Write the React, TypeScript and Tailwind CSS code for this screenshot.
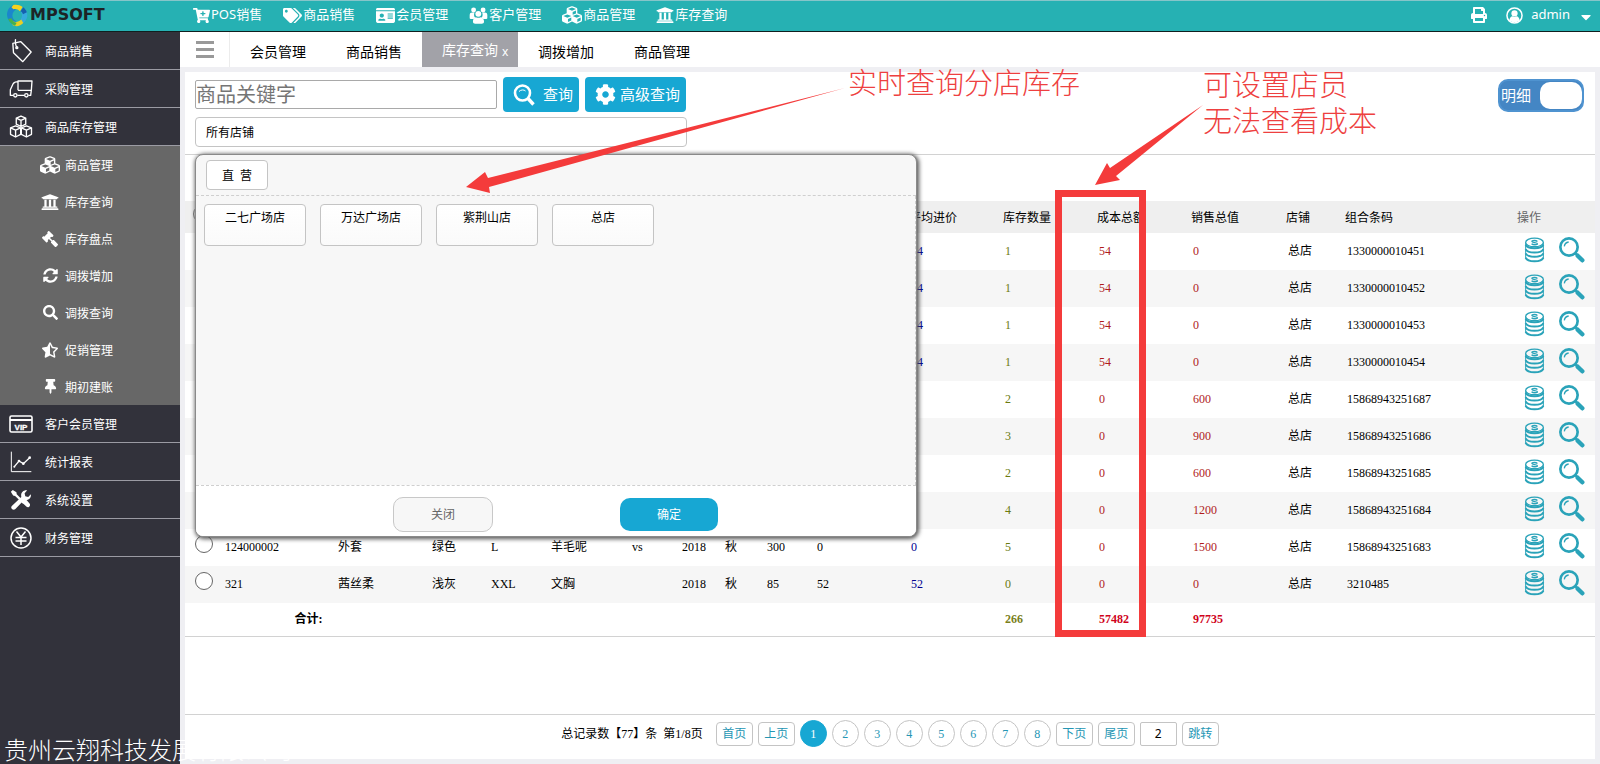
import { useState } from "react";
import type { ReactNode } from "react";
import {
  FaCartPlus,
  FaTags,
  FaIdCard,
  FaCubes,
  FaUniversity,
  FaGavel,
  FaSyncAlt,
  FaSearch,
  FaStarHalfAlt,
  FaThumbtack,
  FaPrint,
  FaCaretDown,
  FaCog,
} from "react-icons/fa";

interface StockRow {
  code?: string;
  name?: string;
  color?: string;
  size?: string;
  material?: string;
  brand?: string;
  year?: string;
  season?: string;
  price?: string;
  cost?: string;
  avg?: string;
  qty: string;
  costTotal: string;
  saleTotal: string;
  barcode: string;
}

const topNav = [
  { label: "POS销售", icon: <FaCartPlus size={17} /> },
  { label: "商品销售", icon: <FaTags size={19} /> },
  { label: "会员管理", icon: <FaIdCard size={19} /> },
  { label: "客户管理", icon: <UsersIcon /> },
  { label: "商品管理", icon: <FaCubes size={20} /> },
  { label: "库存查询", icon: <FaUniversity size={18} /> },
];

const stockMenu = [
  { label: "商品管理", icon: <FaCubes size={20} /> },
  { label: "库存查询", icon: <FaUniversity size={18} /> },
  { label: "库存盘点", icon: <FaGavel size={16} className="-scale-x-100" /> },
  { label: "调拨增加", icon: <FaSyncAlt size={15} /> },
  { label: "调拨查询", icon: <FaSearch size={15} /> },
  { label: "促销管理", icon: <FaStarHalfAlt size={16} /> },
  { label: "期初建账", icon: <FaThumbtack size={15} /> },
];

const tabs = ["会员管理", "商品销售", "库存查询", "调拨增加", "商品管理"];
const stores = ["二七广场店", "万达广场店", "紫荆山店", "总店"];
const pages = [1, 2, 3, 4, 5, 6, 7, 8];

const rows: StockRow[] = [
  { avg: "54", qty: "1", costTotal: "54", saleTotal: "0", barcode: "1330000010451" },
  { avg: "54", qty: "1", costTotal: "54", saleTotal: "0", barcode: "1330000010452" },
  { avg: "54", qty: "1", costTotal: "54", saleTotal: "0", barcode: "1330000010453" },
  { avg: "54", qty: "1", costTotal: "54", saleTotal: "0", barcode: "1330000010454" },
  { qty: "2", costTotal: "0", saleTotal: "600", barcode: "15868943251687" },
  { qty: "3", costTotal: "0", saleTotal: "900", barcode: "15868943251686" },
  { qty: "2", costTotal: "0", saleTotal: "600", barcode: "15868943251685" },
  { qty: "4", costTotal: "0", saleTotal: "1200", barcode: "15868943251684" },
  {
    code: "124000002",
    name: "外套",
    color: "绿色",
    size: "L",
    material: "羊毛呢",
    brand: "vs",
    year: "2018",
    season: "秋",
    price: "300",
    cost: "0",
    avg: "0",
    qty: "5",
    costTotal: "0",
    saleTotal: "1500",
    barcode: "15868943251683",
  },
  {
    code: "321",
    name: "茜丝柔",
    color: "浅灰",
    size: "XXL",
    material: "文胸",
    year: "2018",
    season: "秋",
    price: "85",
    cost: "52",
    avg: "52",
    qty: "0",
    costTotal: "0",
    saleTotal: "0",
    barcode: "3210485",
  },
];

function LogoMark() {
  return (
    <svg viewBox="18 12 66 70" className="h-[23px] w-[22px]">
      <path d="M44 14C28 18 19 32 21 48c2 14 11 24 24 29l4-12c-8-4-12-10-12-18 0-9 5-15 13-19Z" fill="#1b86cc" />
      <path d="M40 15c10-2 20 0 28 6l-8 13c-6-6-13-8-20-6l-6-6Z" fill="#f6d21f" />
      <path d="M70 22c10 7 14 18 12 29-2 9-7 16-14 20l-6-13c5-6 6-14 1-22Z" fill="#35a9dd" />
      <path d="M36 62c9 7 19 6 28-3l6 11c-8 9-20 12-32 7Z" fill="#e9cf25" />
      <path d="M24 58c4 9 11 17 21 20l5-9c-8-2-13-7-16-14Z" fill="#45b04f" />
      <path d="M70 22c5 4 9 9 11 15l-12 6c-1-4-3-7-7-9Z" fill="#1560ae" />
    </svg>
  );
}

function UsersIcon() {
  return (
    <svg viewBox="266 16 58 52" className="h-[17px] w-[19px]" fill="currentColor">
      <circle cx="280" cy="25" r="7.500" />
      <circle cx="309" cy="25" r="7.500" />
      <path d="M268 50V41c0-6 3-8 8-8h7c-3 6-2 12 2 16l-5 4h-7c-3 0-5-1-5-3ZM322 50V41c0-6-3-8-8-8h-8c3 6 2 12-2 16l6 4h7c3 0 5-1 5-3Z" />
      <circle cx="294.500" cy="37" r="9" />
      <path d="M278 61c0-8 3-13 9-14 5 3 10 3 15 0 6 1 10 6 10 14 0 4-3 6-7 6h-20c-4 0-7-2-7-6Z" />
    </svg>
  );
}

function UserCircleIcon() {
  return (
    <svg viewBox="0 0 18 18" className="ml-[19px] size-[17px]">
      <circle cx="9" cy="9" r="8" fill="none" stroke="currentColor" strokeWidth="1.600" />
      <circle cx="9" cy="6.800" r="3.300" fill="currentColor" />
      <path d="M3.500 14c.5-3 2-4 3.200-4.200 1.500 1 3.100 1 4.600 0 1.200.2 2.700 1.200 3.200 4.200-3 3-8 3-11 0Z" fill="currentColor" />
    </svg>
  );
}

function TagIcon() {
  return (
    <svg viewBox="30 114 68 72" className="h-6 w-[23px]" fill="none" stroke="currentColor" strokeWidth="4" strokeLinejoin="round">
      <path d="M38 127l24-5 31 31-25 29-28-27Z" />
      <circle cx="50" cy="140" r="3" />
      <path d="M50 139c-4-6-5-13-4-23" strokeLinecap="round" />
    </svg>
  );
}

function TruckIcon() {
  return (
    <svg viewBox="28 230 72 60" className="h-5 w-6" fill="none" stroke="currentColor" strokeWidth="4" strokeLinejoin="round">
      <path d="M55 264V236h42l-2 28H55M95 264l-2 15h-7M74 279H53M41 279h-9V262l8-17c3-6 8-7 15-7" />
      <circle cx="47" cy="279" r="5" />
      <circle cx="80" cy="279" r="5" />
    </svg>
  );
}

function BoxesIcon() {
  return (
    <svg viewBox="30 345 70 68" className="h-[23px] w-6" fill="none" stroke="currentColor" strokeWidth="4" strokeLinejoin="round">
      <path d="M65 348l14 6v18l-14 7-14-7v-18ZM51 354l14 7 14-7M65 361v18" />
      <path d="M49 377l15 6v19l-15 8-15-8v-19ZM34 383l15 7 15-7M49 390v20" />
      <path d="M81 377l15 6v19l-15 8-15-8v-19ZM66 383l15 7 15-7M81 390v20" />
    </svg>
  );
}

function VipIcon() {
  return (
    <svg viewBox="0 0 24 18" className="h-[18px] w-6" fill="none" stroke="currentColor" strokeWidth="1.600">
      <rect x="1" y="1" width="22" height="16" rx="1.500" />
      <path d="M1 5h22" strokeWidth="2" />
      <text x="12" y="14.500" textAnchor="middle" fontSize="8" fontWeight="700" fill="currentColor" stroke="currentColor" strokeWidth=".3" fontFamily="Liberation Sans, sans-serif">
        VIP
      </text>
    </svg>
  );
}

function ChartIcon() {
  return (
    <svg viewBox="32 508 66 66" className="size-[22px]" fill="none" stroke="currentColor" strokeWidth="3">
      <path d="M36 510v60h60" />
      <path d="M45 555l14-17 13 8 19-18" strokeWidth="4" />
      <g fill="currentColor" stroke="none">
        <circle cx="45" cy="555" r="3" />
        <circle cx="59" cy="538" r="4" />
        <circle cx="72" cy="546" r="4" />
        <circle cx="91" cy="528" r="4" />
      </g>
    </svg>
  );
}

function ToolsIcon() {
  return (
    <svg viewBox="32 624 66 64" className="h-[21px] w-[22px]" fill="currentColor">
      <path d="M34 632l6-5 11 7 1 6 12 12-5 5-12-12-6-1Z" />
      <path d="M66 661l6-6c5-1 9 2 12 5l7 8c5 6-3 15-9 10l-9-8c-4-3-8-5-7-9Z" />
      <path d="M37 676l29-28c-3-12 6-22 18-20l-8 9 2 9 9 2 8-8c2 12-8 20-20 17L48 685c-7 6-17-3-11-9Z" />
    </svg>
  );
}

function YenIcon() {
  return (
    <svg viewBox="0 0 22 22" className="size-[22px]" fill="none" stroke="currentColor" strokeWidth="1.500">
      <circle cx="11" cy="11" r="10" />
      <path d="M6.500 4.500L11 10l4.500-5.500M11 10v8M5.500 10.500h11M5.500 14h11" />
    </svg>
  );
}

function CoinsIcon() {
  return (
    <svg viewBox="76 20 64 78" className="h-[26px] w-[21px]" fill="none" stroke="#2aa3b9">
      <ellipse cx="108" cy="36" rx="27" ry="13" strokeWidth="4" />
      <path d="M117 33c-4-4-17-4-17 0s17 3 17 7-14 4-18 0" strokeWidth="4" />
      <path d="M81 38v48M135 38v48" strokeWidth="3" />
      <path d="M81 43c6 14 48 14 54 0M81 56c6 14 48 14 54 0M81 69c6 14 48 14 54 0M81 82c6 15 48 15 54 0" strokeWidth="6" />
    </svg>
  );
}

function LensIcon() {
  return (
    <svg viewBox="182 20 78 78" className="size-[26px]" fill="none" stroke="#2aa3b9">
      <circle cx="212" cy="50" r="26" strokeWidth="8" />
      <path d="M198 48c1-8 6-12 13-13" strokeWidth="4" />
      <path d="M230 68l8 7" strokeWidth="7" />
      <path d="M238 76l14 14" strokeWidth="13" strokeLinecap="round" />
    </svg>
  );
}

function SideItem({ label, icon }: { label: string; icon: ReactNode }) {
  return (
    <a href="#" className="flex h-[38px] items-center border-b border-[#9b9ba3] bg-[#32323b] pl-[9px]">
      <span className="flex w-6 shrink-0 justify-center">{icon}</span>
      <span className="ml-3 pt-0.5">{label}</span>
    </a>
  );
}

function Sidebar() {
  return (
    <nav className="relative w-[180px] shrink-0 bg-[#32323b] text-xs text-white">
      <SideItem label="商品销售" icon={<TagIcon />} />
      <SideItem label="采购管理" icon={<TruckIcon />} />
      <SideItem label="商品库存管理" icon={<BoxesIcon />} />
      <div className="bg-[#676767]">
        {stockMenu.map((item) => (
          <a key={item.label} href="#" className="flex h-[37px] items-center pl-10">
            <span className="flex w-5 justify-center">{item.icon}</span>
            <span className="ml-[5px] pt-0.5">{item.label}</span>
          </a>
        ))}
      </div>
      <SideItem label="客户会员管理" icon={<VipIcon />} />
      <SideItem label="统计报表" icon={<ChartIcon />} />
      <SideItem label="系统设置" icon={<ToolsIcon />} />
      <SideItem label="财务管理" icon={<YenIcon />} />
      {/* Company name runs past the sidebar edge */}
      <div className="absolute bottom-0 left-1 z-10 text-2xl leading-7 font-light whitespace-nowrap">
        贵州云翔科技发展有限公司
      </div>
    </nav>
  );
}

function StorePicker() {
  return (
    <div className="absolute top-full left-0 z-10 mt-[7px] flex h-[383px] w-[722px] flex-col overflow-hidden rounded-lg border border-[#8a8a8a] bg-[#f7f7f7] text-xs shadow-[1px_1px_4px_1px_#555]">
      <div className="h-[41px] border-b border-dashed border-[#cfcfcf] pt-[5px] pl-2.5">
        <button className="h-[30px] w-[62px] rounded border border-[#c4c4c4] bg-white pt-0.5 whitespace-pre">直  营</button>
      </div>
      <div className="flex flex-1 items-start gap-3.5 border-r border-dashed border-[#cfcfcf] pt-2 pl-2">
        {stores.map((store) => (
          <button
            key={store}
            className="flex h-[42px] w-[102px] justify-center rounded border border-[#c4c4c4] bg-linear-to-b from-white to-[#fafafa] pt-[5px]"
          >
            {store}
          </button>
        ))}
      </div>
      <div className="flex h-[51px] items-center gap-[127px] border-t border-dashed border-[#cfcfcf] bg-white pt-1.5 pl-[197px]">
        <button className="h-[35px] w-[100px] rounded-[10px] border border-[#c8c8c8] bg-[#f7f7f7] pt-0.5 text-[#666]">关闭</button>
        <button className="h-[33px] w-[98px] rounded-[10px] bg-[#17a7d3] pt-0.5 text-white">确定</button>
      </div>
    </div>
  );
}

function Filters({ detail, onDetail }: { detail: boolean; onDetail: (v: boolean) => void }) {
  return (
    <div className="flex h-[83px] items-start justify-between border-b border-[#d2d2d2] pt-[5px] pr-[11px] pl-2.5">
      <div>
        <div className="flex items-center gap-1.5">
          <input
            type="text"
            aria-label="商品关键字"
            placeholder="商品关键字"
            className="h-[29px] w-[302px] rounded-xs border border-[#a9a9a9] text-xl placeholder:text-[#757575]"
          />
          <button className="flex h-[35px] w-[76px] items-center gap-2 rounded bg-[#17a7d3] pl-2.5 text-[15px] text-white">
            <svg viewBox="0 0 22 22" className="size-[22px]" fill="none" stroke="currentColor">
              <circle cx="9.500" cy="9" r="7.500" strokeWidth="2.600" />
              <path d="M6 7.500c2-2 5-2 6.500-.500" strokeWidth="1" />
              <path d="M15 14.500l5.500 6" strokeWidth="3.400" />
            </svg>
            查询
          </button>
          <button className="flex h-[35px] w-[101px] items-center gap-1 rounded bg-[#17a7d3] pl-2.5 text-[15px] text-white">
            <FaCog size={21} />
            高级查询
          </button>
        </div>
        <div className="relative mt-[5px]">
          <button
            aria-haspopup="dialog"
            className="flex h-[30px] w-[492px] items-center rounded border border-[#c4c4c4] bg-white pt-0.5 pl-2.5 text-xs"
          >
            所有店铺
          </button>
          <StorePicker />
        </div>
      </div>
      <label className="mt-[2px] flex h-[33px] w-[86px] items-center justify-between rounded-[10px] border-2 border-[#4f93d0] bg-[#4486c4] pl-px text-[15px] text-white">
        明细
        <input
          type="checkbox"
          checked={detail}
          onChange={(e) => onDetail(e.target.checked)}
          className="h-[27px] w-[42px] appearance-none rounded-[10px] bg-white"
        />
      </label>
    </div>
  );
}

function StockTable() {
  return (
    <table className="w-full table-fixed border-b border-[#d2d2d2] text-left font-['Liberation_Serif','Noto_Sans_CJK_SC',sans-serif] text-xs">
      <colgroup>
        <col className="w-[38px]" />
        <col className="w-[113px]" />
        <col className="w-[94px]" />
        <col className="w-[59px]" />
        <col className="w-[60px]" />
        <col className="w-[81px]" />
        <col className="w-[50px]" />
        <col className="w-[43px]" />
        <col className="w-[42px]" />
        <col className="w-[50px]" />
        <col className="w-[94px]" />
        <col className="w-[94px]" />
        <col className="w-[94px]" />
        <col className="w-[94px]" />
        <col className="w-[95px]" />
        <col className="w-[59px]" />
        <col className="w-[172px]" />
        <col className="w-[78px]" />
      </colgroup>
      <thead>
        <tr className="h-8 bg-[#efefef] [&>th]:px-0 [&>th]:pt-0.5 [&>th]:pb-0 [&>th]:font-normal">
          <th className="align-top">
            <input type="radio" name="stock" aria-label="全部" className="mt-0.5 ml-2 size-[18px] appearance-none rounded-full border border-[#777]" />
          </th>
          <th colSpan={10}></th>
          <th>平均进价</th>
          <th>库存数量</th>
          <th>成本总额</th>
          <th>销售总值</th>
          <th>店铺</th>
          <th>组合条码</th>
          <th className="text-[#666]">操作</th>
        </tr>
      </thead>
      <tbody>
        {rows.map((row) => (
          <tr key={row.barcode} className="h-[37px] even:bg-[#f6f6f6] [&>td]:pt-0 [&>td]:pr-0 [&>td]:pb-0.5 [&>td]:pl-0.5">
            <td className="align-top">
              <input
                type="radio"
                name="stock"
                aria-label={row.barcode}
                className="mt-1.5 ml-2 block size-[18px] appearance-none rounded-full border border-[#666] bg-white"
              />
            </td>
            <td>{row.code}</td>
            <td>{row.name}</td>
            <td>{row.color}</td>
            <td>{row.size}</td>
            <td>{row.material}</td>
            <td>{row.brand}</td>
            <td>{row.year}</td>
            <td>{row.season}</td>
            <td>{row.price}</td>
            <td>{row.cost}</td>
            <td className="text-[#000090]">{row.avg}</td>
            <td className="text-[#6b7a10]">{row.qty}</td>
            <td className="text-[#b01c1c]">{row.costTotal}</td>
            <td className="text-[#b01c1c]">{row.saleTotal}</td>
            <td>总店</td>
            <td>{row.barcode}</td>
            <td>
              <div className="flex items-center gap-3.5 pb-0.5 pl-[5px]">
                <button aria-label="库存">
                  <CoinsIcon />
                </button>
                <button aria-label="查看">
                  <LensIcon />
                </button>
              </div>
            </td>
          </tr>
        ))}
      </tbody>
      <tfoot>
        <tr className="h-[33px] font-bold [&>td]:py-0 [&>td]:pr-0 [&>td]:pl-0.5">
          <td colSpan={3} className="text-center">
            合计:
          </td>
          <td colSpan={9}></td>
          <td className="text-[#7b7f1c]">266</td>
          <td className="text-[#d0021b]">57482</td>
          <td className="text-[#d0021b]">97735</td>
          <td colSpan={3}></td>
        </tr>
      </tfoot>
    </table>
  );
}

function PageButton({ children }: { children: ReactNode }) {
  return <button className="h-6 w-[37px] rounded border border-[#c4c4c4] text-[#2596b4]">{children}</button>;
}

function Pagination({ page, onPage }: { page: number; onPage: (p: number) => void }) {
  return (
    <div className="mt-auto flex h-[45px] items-start justify-center border-t border-[#d2d2d2] pt-[5px] font-['Liberation_Serif','Noto_Sans_CJK_SC',sans-serif] text-xs">
      <div className="flex h-[27px] items-center gap-[5px]">
        <span className="mr-2 whitespace-pre">总记录数【77】条  第1/8页</span>
        <PageButton>首页</PageButton>
        <PageButton>上页</PageButton>
        {pages.map((p) => (
          <button
            key={p}
            onClick={() => onPage(p)}
            className={`size-[27px] rounded-full border ${
              p === page ? "border-[#17a7d3] bg-[#17a7d3] text-white" : "border-[#c4c4c4] text-[#2596b4]"
            }`}
          >
            {p}
          </button>
        ))}
        <PageButton>下页</PageButton>
        <PageButton>尾页</PageButton>
        <input
          type="text"
          aria-label="页码"
          defaultValue="2"
          className="h-6 w-[37px] rounded-xs border border-[#c4c4c4] text-center font-['Noto_Sans',sans-serif]"
        />
        <PageButton>跳转</PageButton>
      </div>
    </div>
  );
}

// Red notes laid over the page
function Annotations() {
  return (
    <div className="pointer-events-none absolute inset-0 z-20 text-[29px] leading-9 font-light text-[#ee4040]">
      <svg viewBox="0 0 1220 210" className="absolute top-0 left-0 h-[210px] w-[1220px]" fill="#f43b3b">
        <path d="M466 187l19-15 3 6L845 88 489 187l1 6Z" />
        <path d="M1095 185l12-22 3 5 93-63-87 71 4 4Z" />
      </svg>
      <div className="absolute top-[65px] left-[848px] whitespace-nowrap">实时查询分店库存</div>
      <div className="absolute top-[67px] left-[1203px] whitespace-nowrap">
        可设置店员
        <br />
        无法查看成本
      </div>
      <div className="absolute top-[190px] left-[1055px] h-[447px] w-[91px] border-7 border-[#f43b3b]"></div>
    </div>
  );
}

export default function App() {
  const [activeTab, setActiveTab] = useState("库存查询");
  const [detail, setDetail] = useState(true);
  const [page, setPage] = useState(1);

  return (
    <div className="relative flex min-h-screen flex-col overflow-hidden bg-[#efeff3] font-['Noto_Sans','Noto_Sans_CJK_SC',sans-serif] text-black">
      <header className="flex h-8 items-center border-t border-b border-t-[#86c5c9] border-b-[#10201f] bg-[#26b1b3] pb-0.5 text-[13px] text-white">
        <div className="flex w-[193px] items-center gap-[2px] pl-1.5">
          <LogoMark />
          <span className="font-['DejaVu_Sans',sans-serif] text-base leading-none font-bold text-[#1d2326]">MPSOFT</span>
        </div>
        <nav className="flex flex-1 gap-[21px]">
          {topNav.map((item) => (
            <a key={item.label} href="#" className="flex items-center gap-px whitespace-nowrap">
              <span className="flex min-w-[17px] items-center">{item.icon}</span>
              {item.label}
            </a>
          ))}
        </nav>
        <div className="flex items-center pr-1.5">
          <button aria-label="打印">
            <FaPrint size={16} />
          </button>
          <UserCircleIcon />
          <button className="ml-2 flex items-center gap-2">
            admin
            <FaCaretDown size={16} className="mt-1" />
          </button>
        </div>
      </header>

      <div className="flex flex-1">
        <Sidebar />
        <main className="flex min-w-0 flex-1 flex-col">
          {/* Open page tabs */}
          <div className="flex h-[35px] bg-white text-sm">
            <button aria-label="菜单" className="flex w-[50px] flex-col items-center justify-center gap-1 border-r border-[#ececec] pl-px">
              <span className="h-[3px] w-[18px] bg-[#999]"></span>
              <span className="h-[3px] w-[18px] bg-[#999]"></span>
              <span className="h-[3px] w-[18px] bg-[#999]"></span>
            </button>
            {tabs.map((tab) => (
              <button
                key={tab}
                onClick={() => setActiveTab(tab)}
                className={`flex w-24 items-center pl-5 ${tab === activeTab ? "bg-[#a2a2a8] text-white" : "pt-1"}`}
              >
                {tab}
                {tab === activeTab && <span className="mt-1 ml-1 text-xs">x</span>}
              </button>
            ))}
          </div>

          <section className="m-[5px] flex flex-1 flex-col bg-white">
            <Filters detail={detail} onDetail={setDetail} />
            <div className="pt-[46px]">
              <StockTable />
            </div>
            <Pagination page={page} onPage={setPage} />
          </section>
        </main>
      </div>

      <Annotations />
    </div>
  );
}
